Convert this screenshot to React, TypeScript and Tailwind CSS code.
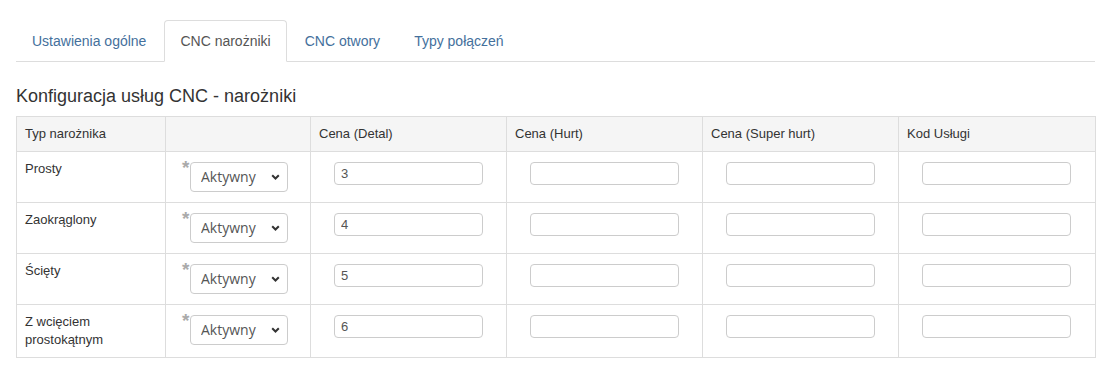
import { useState } from 'react'

interface CornerRow {
  id: string
  name: string
  detal: string
}

const rows: CornerRow[] = [
  { id: 'prosty', name: 'Prosty', detal: '3' },
  { id: 'zaokraglony', name: 'Zaokrąglony', detal: '4' },
  { id: 'sciety', name: 'Ścięty', detal: '5' },
  { id: 'wciecie', name: 'Z wcięciem prostokątnym', detal: '6' },
]

const tabs = ['Ustawienia ogólne', 'CNC narożniki', 'CNC otwory', 'Typy połączeń']

function StatusSelect() {
  return (
    <div className="flex items-start pl-[8px]">
      <span className="w-[8px] text-[19px] leading-[16px] text-[#aaa] font-bold">*</span>
      <div className="relative mt-[2px]">
        <select
          defaultValue="1"
          className="appearance-none w-[98px] h-[30px] border border-[#ccc] rounded-[4px] bg-white pl-[10px] text-[14px] text-[#555] font-['Open_Sans',sans-serif] outline-none"
        >
          <option value="1">Aktywny</option>
          <option value="0">Nieaktywny</option>
        </select>
        <svg
          className="absolute right-[8px] top-[12px] pointer-events-none"
          width="9"
          height="6"
          viewBox="0 0 9 6"
        >
          <polyline points="1.2,1.2 4.5,4.5 7.8,1.2" fill="none" stroke="#333" strokeWidth="2" />
        </svg>
      </div>
    </div>
  )
}

function PriceInput({ value }: { value?: string }) {
  return (
    <input
      type="text"
      defaultValue={value}
      className="mt-[2px] w-[149px] h-[23px] border border-[#ccc] rounded-[4px] px-[6px] text-[13px] text-[#555] outline-none"
    />
  )
}

export default function App() {
  const [active, setActive] = useState(1)

  return (
    <div className="w-[1112px] min-h-[373px] bg-white pl-4 pr-[17px] pt-5 font-['Liberation_Sans',Arial,sans-serif] text-[#333]">
      {/* Tabs */}
      <ul className="flex border-b border-[#ddd]">
        {tabs.map((tab, i) => (
          <li key={tab} className="-mb-px mr-[2px]">
            <button
              type="button"
              onClick={() => setActive(i)}
              className={
                i === active
                  ? 'block px-[15px] py-[10px] text-[14px] leading-[20px] border border-[#ddd] border-b-white rounded-t-[4px] bg-white text-[#555]'
                  : 'block px-[15px] py-[10px] text-[14px] leading-[20px] border border-transparent rounded-t-[4px] text-[#44709c]'
              }
            >
              {tab}
            </button>
          </li>
        ))}
      </ul>

      <h4 className="mt-[24px] mb-[10px] text-[18px] leading-[20px] text-[#333]">
        Konfiguracja usług CNC - narożniki
      </h4>

      {/* Table */}
      <table className="w-[1079px] table-fixed border-collapse border border-[#ddd] text-[13px] leading-[18px]">
        <colgroup>
          <col className="w-[149px]" />
          <col className="w-[145px]" />
          <col className="w-[196px]" />
          <col className="w-[196px]" />
          <col className="w-[196px]" />
          <col className="w-[197px]" />
        </colgroup>
        <thead>
          <tr className="bg-[#f5f5f5]">
            <th className="border border-[#ddd] px-2 py-2 text-left font-normal">Typ narożnika</th>
            <th className="border border-[#ddd] px-2 py-2 text-left font-normal"></th>
            <th className="border border-[#ddd] px-2 py-2 text-left font-normal">Cena (Detal)</th>
            <th className="border border-[#ddd] px-2 py-2 text-left font-normal">Cena (Hurt)</th>
            <th className="border border-[#ddd] px-2 py-2 text-left font-normal">Cena (Super hurt)</th>
            <th className="border border-[#ddd] px-2 py-2 text-left font-normal">Kod Usługi</th>
          </tr>
        </thead>
        <tbody>
          {rows.map(row => (
            <tr key={row.id} className="h-[51px]">
              <td className="border border-[#ddd] px-2 py-2 align-top">{row.name}</td>
              <td className="border border-[#ddd] px-2 py-2 align-top">
                <StatusSelect />
              </td>
              <td className="border border-[#ddd] pl-[23px] pr-2 py-2 align-top">
                <PriceInput value={row.detal} />
              </td>
              <td className="border border-[#ddd] pl-[23px] pr-2 py-2 align-top">
                <PriceInput />
              </td>
              <td className="border border-[#ddd] pl-[23px] pr-2 py-2 align-top">
                <PriceInput />
              </td>
              <td className="border border-[#ddd] pl-[23px] pr-2 py-2 align-top">
                <PriceInput />
              </td>
            </tr>
          ))}
        </tbody>
      </table>
    </div>
  )
}
